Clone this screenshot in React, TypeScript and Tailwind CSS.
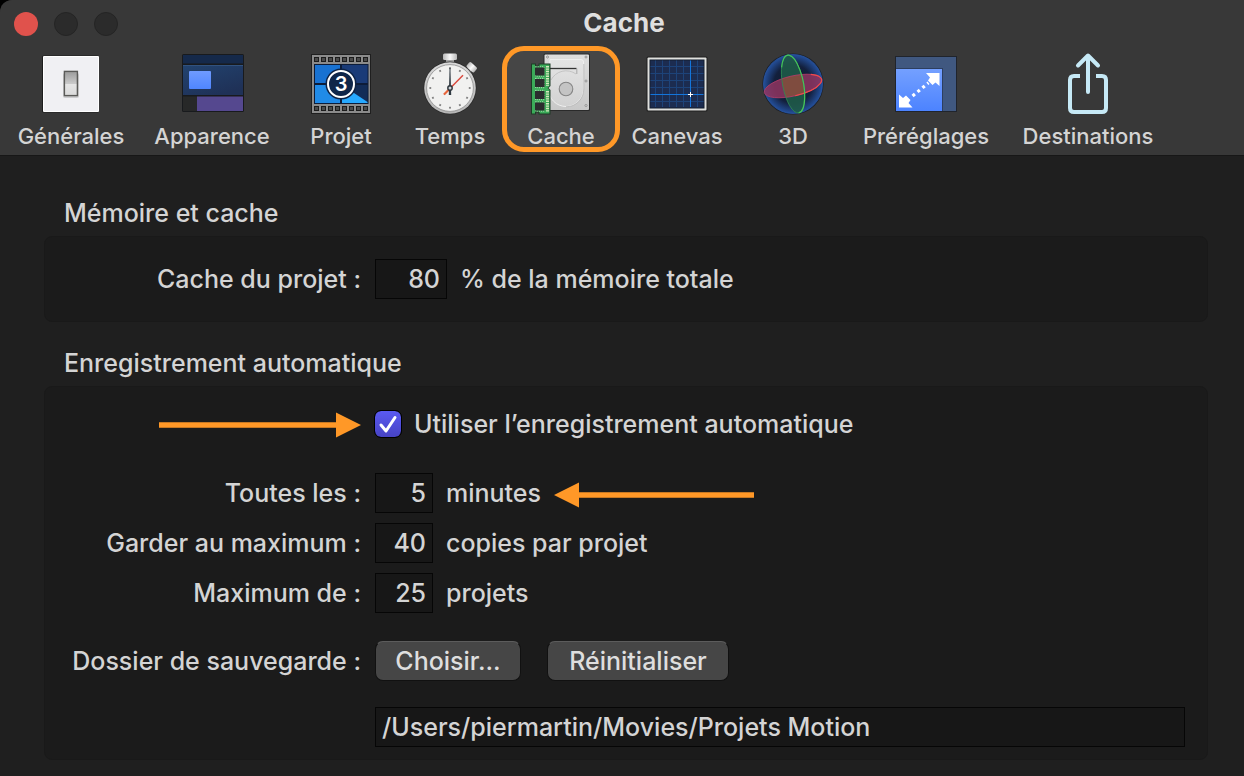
import { useState, type ReactNode } from "react";

function SwitchIcon() {
  return (
    <svg viewBox="0 0 64 64" className="size-16" aria-hidden="true">
      <defs>
        <linearGradient id="switch" x1="0" y1="0" x2="0" y2="1">
          <stop offset="0" stopColor="#9b9b9b" />
          <stop offset="0.5" stopColor="#c9c9c9" />
          <stop offset="0.5" stopColor="#e6e6e6" />
          <stop offset="1" stopColor="#dadada" />
        </linearGradient>
      </defs>
      <rect x="3" y="3.5" width="57" height="57" rx="1.5" fill="#1d1d1d" />
      <rect x="4" y="4" width="56" height="56" rx="1" fill="#ffffff" />
      <rect x="5" y="5" width="54" height="54" fill="#f0f0f3" />
      <rect x="24" y="21" width="16" height="25" rx="2" fill="#000" opacity="0.15" />
      <rect x="25.4" y="19.4" width="13" height="24.2" fill="url(#switch)" stroke="#5a5a58" strokeWidth="1.4" />
    </svg>
  );
}

function AppearanceIcon() {
  return (
    <svg viewBox="0 0 64 64" className="size-16" aria-hidden="true">
      <defs>
        <linearGradient id="pane" x1="0" y1="0" x2="0.6" y2="1">
          <stop offset="0" stopColor="#22436f" />
          <stop offset="1" stopColor="#1f3157" />
        </linearGradient>
        <linearGradient id="tile" x1="0" y1="0" x2="0" y2="1">
          <stop offset="0" stopColor="#6f9bff" />
          <stop offset="1" stopColor="#4f86ff" />
        </linearGradient>
      </defs>
      <rect x="2" y="2" width="62" height="58" rx="1.5" fill="#181a1d" />
      <rect x="3" y="3" width="60" height="8.5" fill="#15294a" />
      <rect x="3" y="13" width="60" height="30" fill="url(#pane)" />
      <rect x="3" y="13" width="60" height="1" fill="#31527f" />
      <rect x="9" y="19" width="22" height="18" rx="1" fill="url(#tile)" />
      <rect x="3" y="44.5" width="14" height="14.5" fill="#272828" />
      <rect x="17" y="44.5" width="46" height="14.5" fill="#55488f" />
    </svg>
  );
}

function FilmIcon() {
  const holes = [5, 12, 19, 26, 33, 40, 47, 54];
  return (
    <svg viewBox="0 0 64 64" className="size-16" aria-hidden="true">
      <rect x="2" y="2" width="60" height="60" fill="#1f1f1f" />
      <rect x="3" y="3" width="58" height="58" fill="#8b8b8b" />
      {holes.map((x) => (
        <g key={x} fill="#4b4b4b" stroke="#1c1c1c">
          <rect x={x + 0.5} y="5.5" width="4" height="4" />
          <rect x={x + 0.5} y="54.5" width="4" height="4" />
        </g>
      ))}
      <rect x="5" y="12" width="54.5" height="40" fill="#0d1c38" />
      <rect x="6" y="13" width="25" height="18" fill="#1872d2" />
      <rect x="6" y="33" width="25" height="18" fill="#208be8" />
      <rect x="33" y="13" width="25.5" height="18" fill="#1a3b78" />
      <rect x="33" y="33" width="25.5" height="18" fill="#122c57" />
      <path d="M33 33 L58.5 50 V51 H33 Z" fill="#27a9ff" />
      <circle cx="32" cy="32" r="15.5" fill="#0d2244" />
      <circle cx="32" cy="32" r="13" fill="#0f2649" stroke="#fff" strokeWidth="2" />
      <text x="32" y="39" textAnchor="middle" fontSize="20" fontWeight="600" fill="#fff" fontFamily="Inter, sans-serif">
        3
      </text>
    </svg>
  );
}

function StopwatchIcon() {
  const ticks = [0, 30, 60, 90, 120, 150, 180, 210, 240, 270, 300, 330];
  return (
    <svg viewBox="0 0 64 64" className="size-16" aria-hidden="true">
      <defs>
        <linearGradient id="rim" x1="0" y1="0" x2="0" y2="1">
          <stop offset="0" stopColor="#d9d9d9" />
          <stop offset="1" stopColor="#b5b5b5" />
        </linearGradient>
        <linearGradient id="crown" x1="0" y1="0" x2="1" y2="0">
          <stop offset="0" stopColor="#b8b8b8" />
          <stop offset="0.5" stopColor="#fafafa" />
          <stop offset="1" stopColor="#b8b8b8" />
        </linearGradient>
      </defs>
      <rect x="28" y="6" width="8" height="5" fill="#a5a5a5" />
      <rect x="25" y="1.5" width="14" height="6.5" rx="1.5" fill="url(#crown)" />
      <g transform="rotate(42 53.7 15.3)">
        <rect x="51" y="17" width="5" height="5" fill="#9a9a9a" />
        <rect x="48.7" y="12" width="10" height="6.5" rx="1.5" fill="url(#crown)" />
      </g>
      <circle cx="32" cy="36" r="26.5" fill="#2a2a2a" />
      <circle cx="32" cy="36" r="25.8" fill="url(#rim)" />
      <circle cx="32" cy="36" r="23.4" fill="#f1f1f0" stroke="#8e8e8e" strokeWidth="0.8" />
      {ticks.map((a) => (
        <rect key={a} x="31.1" y="15.4" width="1.8" height="1.8" fill="#7d7d7d" transform={`rotate(${a} 32 36)`} />
      ))}
      <path d="M26 42.5 L45 23.3" stroke="#d9463a" strokeWidth="1.4" />
      <path d="M26 42.5 L31 37.5" stroke="#e8663a" strokeWidth="2" />
      <path d="M31.6 15.5 H32.4 L33.2 43 H30.8 Z" fill="#303a42" />
      <circle cx="32" cy="36" r="2.2" fill="#cfd4d8" stroke="#2c353c" strokeWidth="1.4" />
    </svg>
  );
}

function CacheIcon() {
  const chips = [15.5, 27, 39, 50.5];
  return (
    <svg viewBox="0 0 64 64" className="size-16" aria-hidden="true">
      <defs>
        <linearGradient id="platter" x1="0" y1="0" x2="0" y2="1">
          <stop offset="0" stopColor="#e4e4e4" />
          <stop offset="1" stopColor="#d2d2d2" />
        </linearGradient>
        <linearGradient id="drive" x1="0" y1="0" x2="0" y2="1">
          <stop offset="0" stopColor="#dedede" />
          <stop offset="1" stopColor="#c8c8c8" />
        </linearGradient>
      </defs>
      <rect x="14.5" y="1.5" width="46.5" height="57.5" rx="1.5" fill="#2a2a2a" />
      <rect x="15.5" y="2.5" width="44.5" height="55.5" rx="1" fill="url(#drive)" />
      <path
        d="M21 7.5 H52 Q54.5 7.5 54.5 10 V37 A17.5 17.5 0 0 1 19.5 37 Z"
        fill="url(#platter)"
        stroke="#efefef"
      />
      <path d="M54.8 12 V37 A17.5 17.5 0 0 1 37 54.8" fill="none" stroke="#b4b4b4" strokeWidth="0.8" />
      <path d="M20 16.5 H47.5" fill="none" stroke="#333333" strokeWidth="1.3" />
      <path d="M47.8 16.5 V22" fill="none" stroke="#9a9a9a" strokeWidth="0.8" />
      <path d="M22 28 A17 17 0 0 1 47 22" fill="none" stroke="#bdbdbd" strokeWidth="0.8" />
      <circle cx="37" cy="37" r="6.8" fill="#c4c4c4" stroke="#858585" strokeWidth="1.1" />
      {[4.5, 28.5, 53].map((y) => (
        <circle key={y} cx="57" cy={y + 0.5} r="1" fill="#f4f4f4" stroke="#7c7c7c" strokeWidth="0.8" />
      ))}
      <circle cx="18.5" cy="5" r="1" fill="#f4f4f4" stroke="#7c7c7c" strokeWidth="0.8" />
      <path d="M2 11.5 H7 V13.5 H9.5 V11.5 H21.5 V34 L19.5 36 L21.5 38 V62.5 H9.5 V60.5 H7 V62.5 H2 Z" fill="#1e3b26" />
      <path d="M3 12.5 H6 V14.5 H10.5 V12.5 H20.5 V34 L18.5 36 L20.5 38 V61.5 H10.5 V59.5 H6 V61.5 H3 Z" fill="#3bab59" />
      {chips.map((y) => (
        <g key={y}>
          <rect x="6.5" y={y - 0.7} width="8.5" height="9.4" fill="none" stroke="#b9e3bb" strokeWidth="1" strokeDasharray="1 1.2" />
          <rect x="6" y={y} width="9.5" height="8" fill="#2b2d2e" />
        </g>
      ))}
      <path d="M18.5 14 V34 M18.5 39 V60" stroke="#d7e8bd" strokeWidth="3" strokeDasharray="1.4 1" />
    </svg>
  );
}

function CanvasIcon() {
  return (
    <svg viewBox="0 0 64 64" className="size-16" aria-hidden="true">
      <rect x="1.5" y="4.5" width="61" height="55" rx="1.5" fill="#1e1e1e" />
      <rect x="2.5" y="5.5" width="59" height="53" rx="1" fill="#dfe0dd" />
      <rect x="4.5" y="7.5" width="55" height="49" fill="#131c2f" />
      <rect x="5.5" y="8.5" width="53" height="47" fill="#1c2c50" />
      <path
        d="M10.5 8.5 V55 M17.5 8.5 V55 M24.5 8.5 V55 M31.5 8.5 V55 M38.5 8.5 V55 M52.5 8.5 V55 M5.5 14.5 H58.5 M5.5 21.5 H58.5 M5.5 28.5 H58.5 M5.5 35.5 H58.5 M5.5 49.5 H58.5"
        stroke="#1d4379"
      />
      <path d="M45.5 8.5 V55 M5.5 42.5 H58.5" stroke="#1375dc" />
      <path d="M45.5 40 V45 M43 42.5 H48" stroke="#ffffff" />
    </svg>
  );
}

function SphereIcon() {
  return (
    <svg viewBox="0 0 64 64" className="size-16" aria-hidden="true">
      <defs>
        <radialGradient id="sphere">
          <stop offset="0" stopColor="#101726" />
          <stop offset="0.65" stopColor="#13203d" />
          <stop offset="1" stopColor="#24509c" />
        </radialGradient>
        <clipPath id="redDisc">
          <ellipse cx="32" cy="34" rx="29.4" ry="10" transform="rotate(-13 32 34)" />
        </clipPath>
      </defs>
      <circle cx="32" cy="32" r="30.6" fill="#1b1f28" />
      <circle cx="32" cy="32" r="29.5" fill="url(#sphere)" stroke="#2755a4" strokeWidth="0.8" />
      <ellipse cx="32" cy="32" rx="10.4" ry="29.4" transform="rotate(-11 32 32)" fill="#1f5a48" fillOpacity="0.9" />
      <ellipse cx="32" cy="34" rx="29.4" ry="10" transform="rotate(-13 32 34)" fill="#8f3560" fillOpacity="0.85" />
      <g clipPath="url(#redDisc)">
        <ellipse cx="32" cy="32" rx="10.4" ry="29.4" transform="rotate(-11 32 32)" fill="#7f4c3f" />
      </g>
      <ellipse cx="32" cy="34" rx="29.4" ry="10" transform="rotate(-13 32 34)" fill="none" stroke="#b03d68" strokeWidth="0.8" />
      <path
        d="M52 26.7 A29.4 10 0 0 1 32 44"
        fill="none"
        stroke="#f0494c"
        strokeWidth="1.2"
        transform="rotate(-13 32 34)"
      />
      <ellipse cx="32" cy="32" rx="10.4" ry="29.4" transform="rotate(-11 32 32)" fill="none" stroke="#2f8b53" strokeWidth="0.8" />
      <path
        d="M24 13.5 A10.4 29.4 0 1 1 32 61.4"
        fill="none"
        stroke="#46c45a"
        strokeWidth="1.2"
        transform="rotate(-11 32 32)"
      />
    </svg>
  );
}

function PresetIcon() {
  return (
    <svg viewBox="0 0 64 64" className="size-16" aria-hidden="true">
      <defs>
        <linearGradient id="preset" x1="0" y1="0" x2="0" y2="1">
          <stop offset="0" stopColor="#74a0ff" />
          <stop offset="1" stopColor="#4c83ff" />
        </linearGradient>
      </defs>
      <rect x="1" y="4" width="62" height="56" fill="#20242c" />
      <rect x="2" y="5" width="60" height="54" fill="#405880" />
      <rect x="2" y="16" width="47" height="43" fill="#2d3f60" />
      <rect x="2" y="17" width="46" height="42" fill="url(#preset)" />
      <path d="M32 21 H45.5 V34 L41.5 30.5 L38.5 33 L34 28.5 L36 25.5 Z" fill="#fff" />
      <path d="M18.5 55.5 H5 V42.5 L9 46 L12 43.5 L16.5 48 L14.5 51 Z" fill="#fff" />
      <path d="M17.8 44.6 L34.5 30.8" stroke="#fff" strokeWidth="3.2" strokeDasharray="3 3.4" strokeDashoffset="-1" />
    </svg>
  );
}

function ShareIcon() {
  return (
    <svg viewBox="0 0 64 64" className="size-16" aria-hidden="true" fill="none" stroke="#c6e9f6" strokeWidth="4">
      <path d="M24 24 H18 Q14 24 14 28 V56 Q14 60 18 60 H46 Q50 60 50 56 V28 Q50 24 46 24 H40" />
      <path d="M32 4 V40 M22 13.5 L32 3.5 L42 13.5" strokeLinecap="round" strokeLinejoin="round" />
    </svg>
  );
}

const tabs: { label: string; width: string; icon: ReactNode }[] = [
  { label: "Générales", width: "w-[126px]", icon: <SwitchIcon /> },
  { label: "Apparence", width: "w-[132px]", icon: <AppearanceIcon /> },
  { label: "Projet", width: "w-[102px]", icon: <FilmIcon /> },
  { label: "Temps", width: "w-[92px]", icon: <StopwatchIcon /> },
  { label: "Cache", width: "w-[106px]", icon: <CacheIcon /> },
  { label: "Canevas", width: "w-[102px]", icon: <CanvasIcon /> },
  { label: "3D", width: "w-[106px]", icon: <SphereIcon /> },
  { label: "Préréglages", width: "w-[136px]", icon: <PresetIcon /> },
  { label: "Destinations", width: "w-[164px]", icon: <ShareIcon /> },
];

function NumberRow({ id, label, value, suffix, width = "w-[58px]" }: {
  id: string;
  label: string;
  value: string;
  suffix: string;
  width?: string;
}) {
  return (
    <div className="grid grid-cols-[316px_1fr] items-center gap-x-3.5">
      <label htmlFor={id} className="text-right">{label}</label>
      <div className="flex items-center gap-[13px]">
        <input
          id={id}
          type="text"
          inputMode="numeric"
          defaultValue={value}
          className={`h-10 border border-[#060606] bg-[#171717] pr-1.5 text-right outline-none ${width}`}
        />
        <span>{suffix}</span>
        {id === "interval" && (
          <svg viewBox="0 0 200 30" className="h-[30px] w-[200px]" aria-hidden="true">
            <path d="M0 17 L25 4.5 V14.3 H200 V19.7 H25 V29.5 Z" fill="#ff9827" />
          </svg>
        )}
      </div>
    </div>
  );
}

export default function App() {
  const [active, setActive] = useState("Cache");
  const [autosave, setAutosave] = useState(true);

  return (
    <div className="min-h-screen bg-black font-['Inter',sans-serif] text-[25px] leading-10 font-medium text-[#d4d4d4]">
      <div className="min-h-screen rounded-tl-xl bg-[#1f1f1f]">
        <header className="rounded-tl-xl border-b border-[#171717] bg-[#383838]">
          <div className="relative flex h-[47px] items-center px-3.5">
            <div className="flex gap-4">
              <button type="button" aria-label="Fermer" className="size-6 rounded-full bg-[#e0524c]" />
              <button type="button" aria-label="Réduire" className="size-6 rounded-full border border-[#242424] bg-[#2b2b2b]" />
              <button type="button" aria-label="Agrandir" className="size-6 rounded-full border border-[#242424] bg-[#2b2b2b]" />
            </div>
            <h1 className="absolute inset-x-0 top-0 pl-1 text-center text-[26px] leading-[46px] font-bold text-[#dfdfdf]">Cache</h1>
          </div>
          <nav className="flex gap-3 px-2 pt-[5px] pb-[5px]">
            {tabs.map((tab) => (
              <button
                key={tab.label}
                type="button"
                onClick={() => setActive(tab.label)}
                className={`relative flex shrink-0 flex-col items-center gap-1.5 text-[22px] leading-7 ${tab.width}`}
              >
                {tab.label === active && (
                  <span className="absolute -inset-x-1.5 -top-1.5 -bottom-0.5 rounded-[22px] border-[5px] border-[#ff9827] bg-[#464646]" />
                )}
                <span className="relative">{tab.icon}</span>
                <span className="relative">{tab.label}</span>
              </button>
            ))}
          </nav>
        </header>

        <main className="pt-[37px] pr-9 pb-4 pl-11">
          <section>
            <h2 className="px-5">Mémoire et cache</h2>
            <div className="mt-[3px] rounded-lg border border-[#191919] bg-[#1b1b1b] py-[22px]">
              <NumberRow id="cache" label="Cache du projet :" value="80" suffix="% de la mémoire totale" width="w-[72px]" />
            </div>
          </section>

          <section className="mt-[21px]">
            <h2 className="px-5">Enregistrement automatique</h2>
            <div className="mt-[3px] rounded-lg border border-[#191919] bg-[#1b1b1b] pt-[17px] pb-3">
              <div className="grid grid-cols-[316px_1fr] items-center gap-x-3.5">
                <svg viewBox="0 0 202 30" className="h-[30px] w-[202px] justify-self-end" aria-hidden="true">
                  <path d="M202 16 L177 3.5 V13.3 H0 V18.7 H177 V28.5 Z" fill="#ff9827" />
                </svg>
                <label className="flex items-center gap-[13px]">
                  <span className="grid size-[26px] place-items-center">
                    <input
                      type="checkbox"
                      checked={autosave}
                      onChange={(e) => setAutosave(e.target.checked)}
                      className="col-start-1 row-start-1 size-[26px] appearance-none rounded-md bg-[#2a2a2a] outline outline-black checked:bg-linear-to-b checked:from-[#5a5af2] checked:to-[#4743c4]"
                    />
                    {autosave && (
                      <svg viewBox="0 0 26 26" className="pointer-events-none col-start-1 row-start-1 size-[26px]" fill="none" aria-hidden="true">
                        <path d="M6 14 L11 20 L20 6.5" stroke="#fff" strokeWidth="3" strokeLinecap="round" strokeLinejoin="round" />
                      </svg>
                    )}
                  </span>
                  Utiliser l’enregistrement automatique
                </label>
              </div>

              <div className="mt-[29px] flex flex-col gap-2.5">
                <NumberRow id="interval" label="Toutes les :" value="5" suffix="minutes" />
                <NumberRow id="copies" label="Garder au maximum :" value="40" suffix="copies par projet" />
                <NumberRow id="projects" label="Maximum de :" value="25" suffix="projets" />
              </div>

              <div className="mt-7 grid grid-cols-[316px_1fr] items-center gap-x-3.5 gap-y-[26px] pr-[22px]">
                <label htmlFor="folder" className="text-right">Dossier de sauvegarde :</label>
                <div className="flex gap-[26px]">
                  <button type="button" className="h-10 w-[146px] rounded-lg border border-[#111111] border-t-[#5c5c5c] bg-[#464646] text-[#dedede] leading-9">
                    Choisir...
                  </button>
                  <button type="button" className="h-10 w-[182px] rounded-lg border border-[#111111] border-t-[#5c5c5c] bg-[#464646] text-[#dedede] leading-9">
                    Réinitialiser
                  </button>
                </div>
                <input
                  id="folder"
                  type="text"
                  defaultValue="/Users/piermartin/Movies/Projets Motion"
                  className="col-start-2 h-10 w-full border border-[#060606] bg-[#171717] px-1.5 outline-none"
                />
              </div>
            </div>
          </section>
        </main>
      </div>
    </div>
  );
}
